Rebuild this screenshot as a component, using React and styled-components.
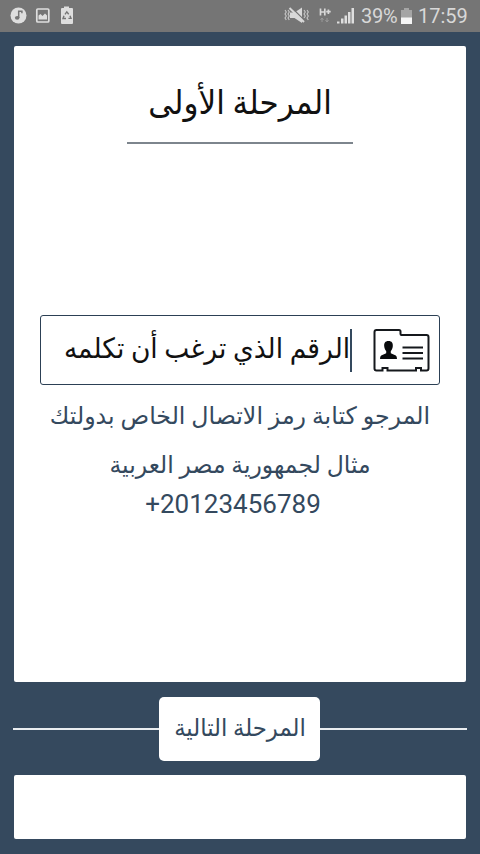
import React from "react";
import styled, { createGlobalStyle } from "styled-components";

const GlobalStyle = createGlobalStyle`
  * { box-sizing: border-box; }
  html, body { margin: 0; padding: 0; }
  body { background: #35495e; overflow: hidden; }
`;

const Screen = styled.div`
  width: 480px;
  height: 854px;
  display: flex;
  flex-direction: column;
  background: #35495e;
  font-family: Roboto, "DejaVu Sans", sans-serif;
  color: #34495e;
`;

const StatusBar = styled.header`
  height: 32px;
  flex: none;
  display: flex;
  justify-content: space-between;
  background: #757575;
  color: #d8d8d8;
`;

const StatusIcons = styled.svg`
  display: block;
  flex: none;
`;

const StatusGroup = styled.div`
  display: flex;
  align-items: center;
  padding-right: 9px;
`;

const StatusText = styled.span`
  font-size: 20px;
  line-height: 32px;
  width: ${(p) => p.$width}px;
  letter-spacing: ${(p) => p.$spacing || 0}px;
  white-space: nowrap;
`;

const Content = styled.main`
  flex: 1;
  display: flex;
  flex-direction: column;
  padding: 14px 14px 15px;
`;

const Card = styled.section`
  height: ${(p) => p.$height}px;
  flex: none;
  display: flex;
  flex-direction: column;
  align-items: center;
  background: #fff;
  border-radius: 2px;
`;

const Title = styled.h1`
  width: 226px;
  height: 98px;
  margin: 0;
  display: flex;
  justify-content: center;
  padding-top: 32px;
  border-bottom: 2px solid #7d858d;
  font-weight: 400;
  color: #111;
`;

const Field = styled.div`
  width: 400px;
  height: 70px;
  margin-top: 171px;
  display: flex;
  align-items: center;
  justify-content: flex-end;
  border: 1px solid #2c4055;
  border-radius: 3px;
  padding-right: 9px;
  color: #111;
`;

const Caret = styled.span`
  width: 2px;
  height: 43px;
  background: #34495e;
  margin-right: 21px;
`;

const Hints = styled.div`
  display: flex;
  flex-direction: column;
  align-items: center;
  padding-top: 10px;
`;

const Line = styled.span`
  display: flex;
  justify-content: center;
  flex: none;
  direction: ${(p) => p.$dir || "rtl"};
  width: ${(p) => p.$width}px;
  height: ${(p) => p.$height}px;
  line-height: ${(p) => p.$height}px;
  font-size: ${(p) => p.$size}px;
  white-space: nowrap;
  transform: translate(${(p) => p.$x || 0}px, ${(p) => p.$y || 0}px) scaleX(${(p) => p.$stretch || 1});
`;

const NextRow = styled.div`
  height: 64px;
  margin: 15px -1px 14px;
  flex: none;
  display: flex;
  align-items: center;
`;

const Rule = styled.span`
  flex: 1;
  height: 2px;
  background: #e9edf0;
`;

const NextButton = styled.button`
  width: 161px;
  height: 64px;
  margin-left: -1px;
  display: flex;
  align-items: center;
  justify-content: center;
  border: 0;
  border-radius: 5px;
  background: #fff;
  color: #34495e;
  font-family: inherit;
  padding: 0;
`;

function NotificationIcons() {
  return (
    <StatusIcons width="90" height="32" viewBox="0 0 90 32">
      <circle cx="18.5" cy="15.5" r="8" fill="#dedede" />
      <ellipse cx="17.2" cy="17.8" rx="2.3" ry="1.9" fill="#757575" />
      <path d="M18.7 18V11.3h3.2v2" stroke="#757575" strokeWidth="1.5" fill="none" />
      <rect x="36.8" y="9" width="12" height="13" rx="1" fill="none" stroke="#dedede" strokeWidth="1.7" />
      <path d="M38.5 19.5v-4l2-1.5 2 2 2.5-2.5 2 2v4z" fill="#dedede" />
      <path d="M61 9q0-1 1-1h2V6.5h5V8h3q1 0 1 1v14q0 1-1 1H62q-1 0-1-1z" fill="#dedede" />
      <path d="M65 14.3l1.8-2.4 1.9 2.4M70 15.8l1 2.6h-2.6M66 18.5h-3l1-2.8" fill="none" stroke="#757575" strokeWidth="1.4" />
    </StatusIcons>
  );
}

function SignalIcons() {
  return (
    <StatusIcons width="77" height="32" viewBox="284 0 77 32">
      <path d="M290 12.500h4.500L302 7.500v15.500l-7.500-5H290z" fill="#d8d8d8" />
      <path d="M291 7l14 14" stroke="#757575" strokeWidth="1.5" />
      <path d="M289.500 8l14.500 14" stroke="#d8d8d8" strokeWidth="2" />
      <path d="M285 10l1.300 2-1.300 2 1.300 2-1.300 2 1.300 2M288 10l1.300 2-1.300 2 1.300 2-1.300 2 1.300 2M304 10l1.300 2-1.300 2 1.300 2-1.300 2M307 10l1.300 2-1.300 2 1.300 2-1.300 2 1.300 2" fill="none" stroke="#c8c8c8" strokeWidth="1.1" />
      <path d="M320.500 8.500v7M324.800 8.500v7M320.500 12h4.300M326.200 11.700h4.500M328.400 9.500v4.500" stroke="#d8d8d8" strokeWidth="1.700" />
      <path d="M322 18v4m-1.500-2l1.500-2 1.500 2M327 18v4m-1.500-2l1.500 2 1.500-2" fill="none" stroke="#999" strokeWidth="1" />
      <path d="M337 21.500h2.500v2H337zM341 18.500h2.500v5H341zM344.500 15.500h2.500v8h-2.500zM348 12h2.500v11.500H348zM351.500 8h2.500v15.500h-2.500z" fill="#dedede" />
    </StatusIcons>
  );
}

function BatteryIcon() {
  return (
    <StatusIcons width="17" height="32" viewBox="2 0 17 32">
      <path d="M2 10h3V8h5v2h3v8H2z" fill="#a5a5a5" />
      <path d="M2 17.500h11V24H2z" fill="#f5f5f5" />
    </StatusIcons>
  );
}

function ContactCardIcon() {
  return (
    <StatusIcons width="57" height="45" viewBox="0 0 57 45">
      <path
        d="M3.500 2H26q1.500 0 1.500 1.500V6q0 1 1 1h25q2 0 2 2v31.500q0 2-2 2H48v-2.500h-5v2.500H14.500v-2.500h-5v2.500H3.500q-2 0-2-2V4q0-2 2-2z"
        fill="none" stroke="#15181c" strokeWidth="2"
      />
      <path d="M15.500 13c3.500 0 4.500 2.200 4.300 5.200-.2 2.200-1 3.800-2 4.800v2.300l5 2.200q1.200.8 1.200 3.500H7q0-2.700 1.200-3.500l5-2.200V23c-1-1-1.800-2.600-2-4.800-.2-3 .8-5.200 4.300-5.200z" fill="#080a0c" />
      <path d="M29.500 19.500h20.500M29.500 25h20.500M29.500 30.500h20.500" stroke="#15181c" strokeWidth="2" />
    </StatusIcons>
  );
}

export default function App() {
  return (
    <>
      <GlobalStyle />
      <Screen>
        <StatusBar>
          <NotificationIcons />
          <StatusGroup>
            <SignalIcons />
            <StatusText $width={40} $spacing={-0.3}>39%</StatusText>
            <BatteryIcon />
            <StatusText $width={53}>17:59</StatusText>
          </StatusGroup>
        </StatusBar>
        <Content>
          <Card $height={636}>
            <Title>
              <Line $width={200} $height={50} $size={33} $stretch={0.94}>المرحلة الأولى</Line>
            </Title>
            <Field>
              <Line $width={286} $height={50} $size={28} $stretch={0.948} $y={-1}>الرقم الذي ترغب أن تكلمه</Line>
              <Caret />
              <ContactCardIcon />
            </Field>
            <Hints>
              <Line $width={380} $height={44} $size={24} $stretch={0.987} $y={-1}>المرجو كتابة رمز الاتصال الخاص بدولتك</Line>
              <Line $width={380} $height={54} $size={24} $stretch={0.98} $y={-1}>مثال لجمهورية مصر العربية</Line>
              <Line $width={180} $height={30} $size={26} $dir="ltr" $x={-7} $y={-4}>+20123456789</Line>
            </Hints>
          </Card>
          <NextRow>
            <Rule />
            <NextButton>
              <Line $width={132} $height={40} $size={24} $stretch={0.95} $y={-1}>المرحلة التالية</Line>
            </NextButton>
            <Rule />
          </NextRow>
          <Card $height={64} />
        </Content>
      </Screen>
    </>
  );
}
